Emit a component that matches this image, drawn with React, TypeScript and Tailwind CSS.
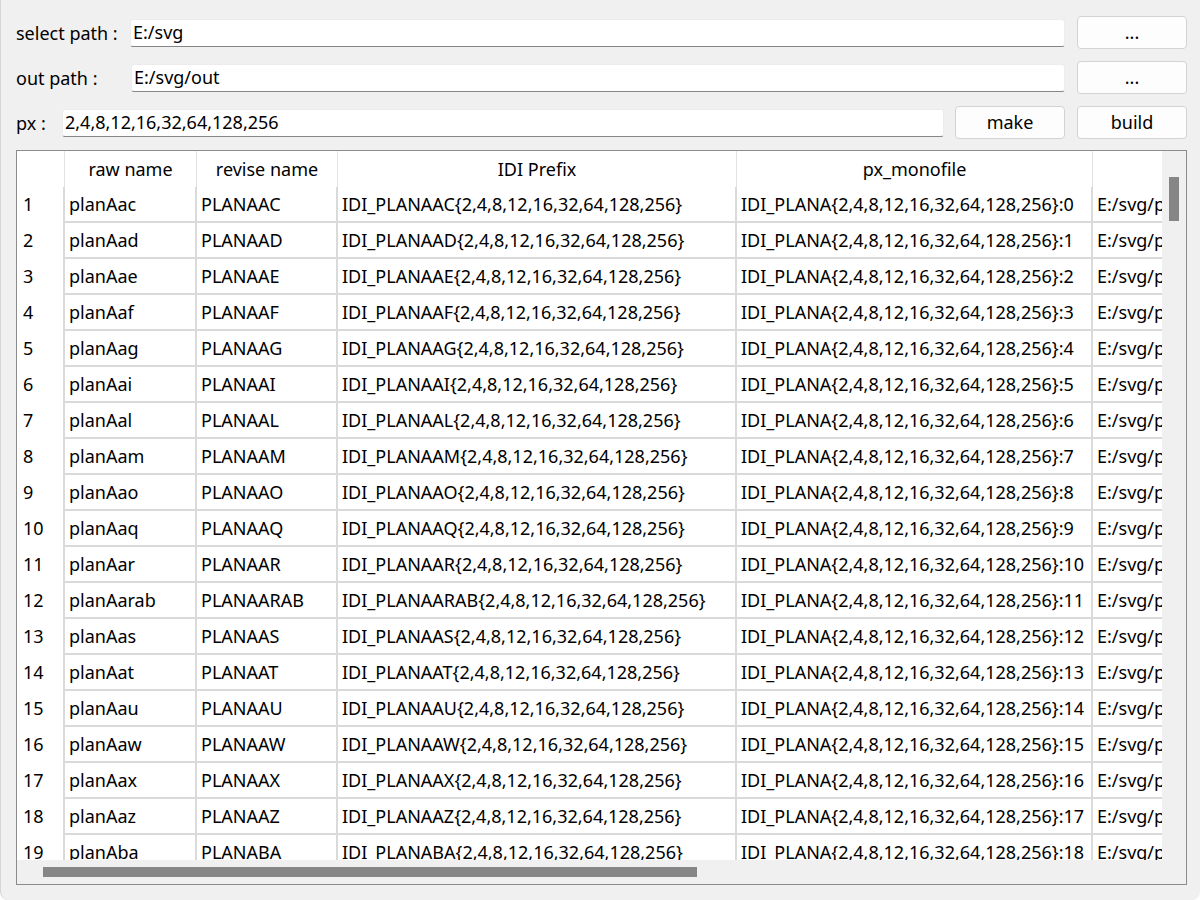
import React from 'react';

const names = [
  'Aac', 'Aad', 'Aae', 'Aaf', 'Aag', 'Aai', 'Aal', 'Aam', 'Aao', 'Aaq',
  'Aar', 'Aarab', 'Aas', 'Aat', 'Aau', 'Aaw', 'Aax', 'Aaz', 'Aba', 'Abb', 'Abc',
];

const PX = '{2,4,8,12,16,32,64,128,256}';

const cols = [
  { title: 'raw name', w: 'w-[132px]' },
  { title: 'revise name', w: 'w-[141px]' },
  { title: 'IDI Prefix', w: 'w-[399px]' },
  { title: 'px_monofile', w: 'w-[356px]' },
  { title: 'file', w: 'w-[900px]' },
];

function PathInput({ value }: { value: string }) {
  return (
    <div className="flex-1 h-[28px] bg-white border border-[#ececec] border-b-[#868686] rounded-[3px] flex items-center pl-[2px] overflow-hidden whitespace-nowrap">
      {value}
    </div>
  );
}

function Btn({ children }: { children: React.ReactNode }) {
  return (
    <div className="w-[110px] h-[33px] shrink-0 bg-[#fdfdfd] border border-[#d3d3d3] rounded-[4px] flex items-center justify-center">
      {children}
    </div>
  );
}

export default function App() {
  const rows = names.map((n, i) => {
    const raw = 'plan' + n;
    const rev = raw.toUpperCase();
    return [raw, rev, `IDI_${rev}${PX}`, `IDI_PLANA${PX}:${i}`, `E:/svg/${raw}.svg`];
  });

  return (
    <div className="w-[1200px] h-[900px] bg-[#f0f0f0] text-black text-[18px] pl-[15px] pr-[13px] pt-4 pb-[15px] flex flex-col border-l border-[#d6d6d6] rounded-b-[8px]" style={{ fontFamily: '"Noto Sans", "Liberation Sans", sans-serif' }}>
      <div className="flex items-center h-[33px]">
        <span className="w-[114px] shrink-0 leading-none">select path :</span>
        <PathInput value="E:/svg" />
        <div className="w-3 shrink-0" />
        <Btn>...</Btn>
      </div>
      <div className="flex items-center h-[33px] mt-3">
        <span className="w-[115px] shrink-0 leading-none">out path :</span>
        <PathInput value="E:/svg/out" />
        <div className="w-3 shrink-0" />
        <Btn>...</Btn>
      </div>
      <div className="flex items-center h-[33px] mt-3">
        <span className="w-[46px] shrink-0 leading-none">px :</span>
        <PathInput value="2,4,8,12,16,32,64,128,256" />
        <div className="w-[11px] shrink-0" />
        <Btn>make</Btn>
        <div className="w-3 shrink-0" />
        <Btn>build</Btn>
      </div>

      <div className="mt-[11px] flex-1 border border-[#8c8c8c] flex flex-col min-h-0">
        <div className="flex flex-1 min-h-0">
          <div className="flex-1 bg-white overflow-hidden">
            <div className="flex h-[36px] whitespace-nowrap">
              <div className="w-[48px] shrink-0 border-r border-[#e3e3e3]" />
              {cols.map(c => (
                <div key={c.title} className={`${c.w} shrink-0 border-r border-[#e3e3e3] flex items-center justify-center`}>
                  {c.title === 'file' ? '' : c.title}
                </div>
              ))}
            </div>
            {rows.map((r, i) => (
              <div key={i} className="flex h-[36px] whitespace-nowrap">
                <div className="w-[48px] shrink-0 border-r-2 border-[#dadada] flex items-center pl-[6px] pb-[1px]">{i + 1}</div>
                {r.map((v, j) => (
                  <div key={j} className={`${cols[j].w} shrink-0 border-r-2 border-b-2 border-[#dadada] flex items-center pl-[4px] overflow-hidden`}>
                    {v}
                  </div>
                ))}
              </div>
            ))}
          </div>
          <div className="w-[24px] shrink-0 bg-[#f0f0f0] pt-[26px] flex justify-center">
            <div className="w-[10px] h-[44px] bg-[#868686]" />
          </div>
        </div>
        <div className="flex h-[24px] shrink-0 bg-[#f0f0f0]">
          <div className="flex-1 flex items-center pl-[26px]">
            <div className="w-[654px] h-[10px] bg-[#868686]" />
          </div>
          <div className="w-[24px]" />
        </div>
      </div>
    </div>
  );
}
